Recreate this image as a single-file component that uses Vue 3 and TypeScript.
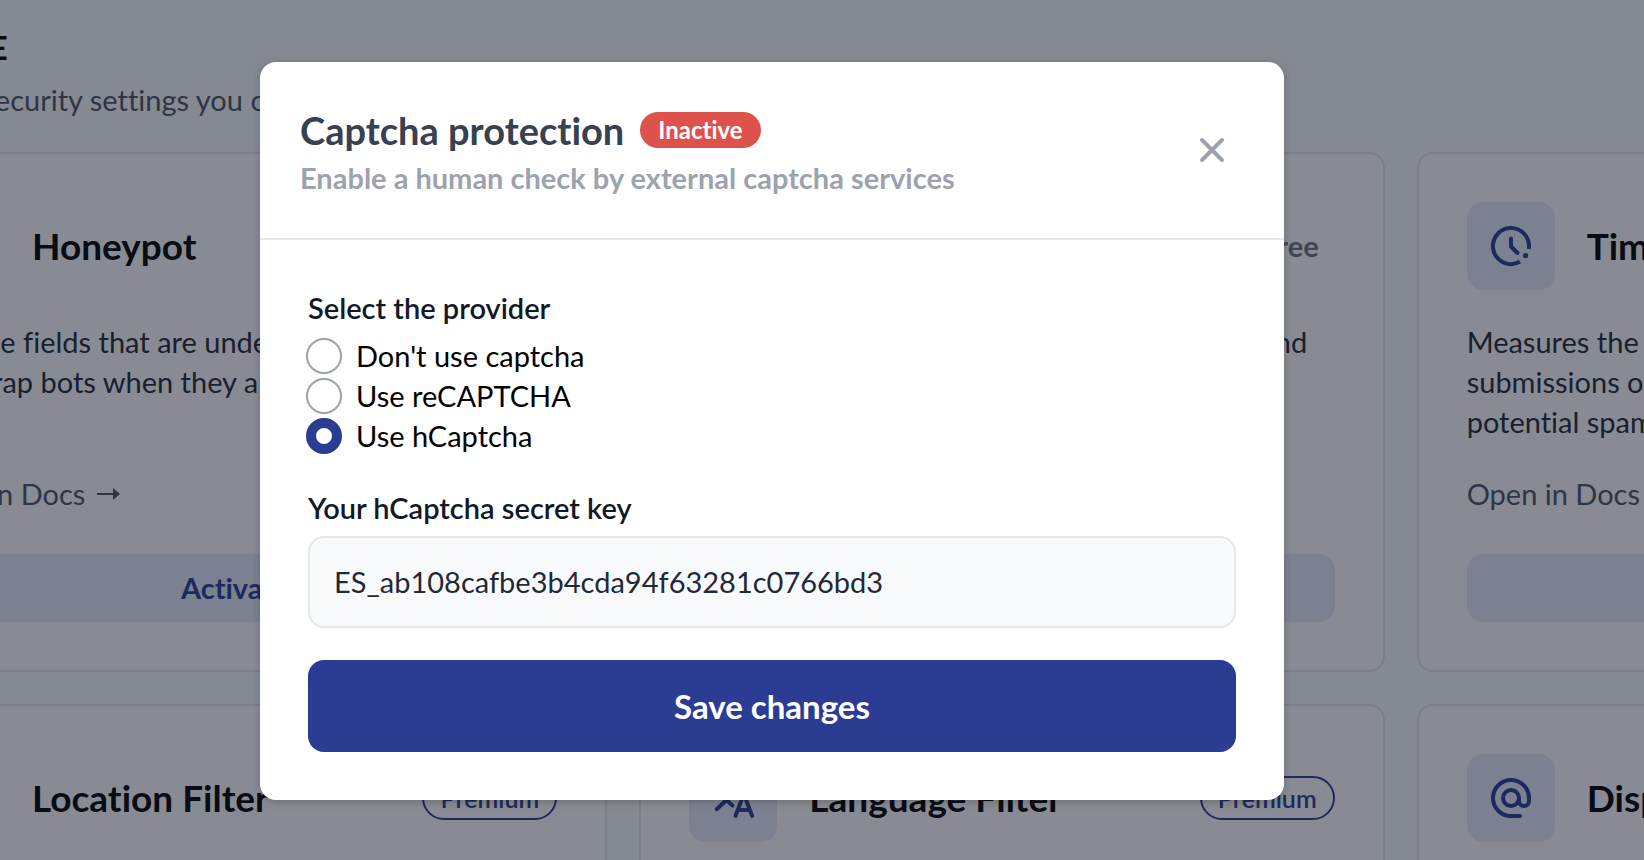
<script setup lang="ts">
import { ref } from 'vue'

type IconName = 'honeypot' | 'captcha' | 'clock' | 'pin' | 'translate' | 'at'

interface Feature {
  title: string
  icon: IconName
  plan: 'Free' | 'Premium'
  text: string[]
}

const features: Feature[] = [
  { title: 'Honeypot', icon: 'honeypot', plan: 'Free', text: ['Invisible fields that are under the hood.', 'They trap bots when they are filled'] },
  { title: 'Captcha', icon: 'captcha', plan: 'Free', text: ['A human check via external captcha services and'] },
  { title: 'Time Trap', icon: 'clock', plan: 'Free', text: ['Measures the time between', 'submissions of a form to detect', 'potential spam'] },
  { title: 'Location Filter', icon: 'pin', plan: 'Premium', text: ['Filter by country'] },
  { title: 'Language Filter', icon: 'translate', plan: 'Premium', text: ['Filter by language'] },
  { title: 'Disposable Emails', icon: 'at', plan: 'Premium', text: ['Filter temporary addresses'] },
]

const providers = [
  { value: 'none', label: "Don't use captcha" },
  { value: 'recaptcha', label: 'Use reCAPTCHA' },
  { value: 'hcaptcha', label: 'Use hCaptcha' },
]

const provider = ref('hcaptcha')
const secretKey = ref('ES_ab108cafbe3b4cda94f63281c0766bd3')
</script>

<template>
  <div class="screen">
    <main class="page">
      <header class="page-head">
        <h1>STORAGE</h1>
        <p>Select all security settings you can change</p>
      </header>
      <section class="grid">
        <article v-for="f in features" :key="f.title" class="card">
          <div class="card-head">
            <span class="tile">
              <svg viewBox="0 0 48 48" class="icon" aria-hidden="true">
                <template v-if="f.icon === 'clock'">
                  <path d="M41.7 27A18 18 0 1 0 33 39.6" class="ring" />
                  <path d="M24 16.5V24.5L30.5 31" />
                  <circle cx="38.6" cy="33.6" r="2.6" class="dot" />
                </template>
                <template v-else-if="f.icon === 'at'">
                  <circle cx="24" cy="24" r="8" />
                  <path d="M33 42H24A18 18 0 1 1 42 24V27A5 5 0 0 1 32 27V24" />
                </template>
                <template v-else-if="f.icon === 'translate'">
                  <path d="M6 10H30M18 6V10M26 10C24 20 16 28 7.7 35.3M12 16C14 22 18 27 23.5 31.5" />
                  <path d="M26.5 42L34.8 20L43.2 42M29.5 36H40.5" />
                </template>
                <template v-else>
                  <circle cx="24" cy="24" r="16" />
                </template>
              </svg>
            </span>
            <h2>{{ f.title }}</h2>
            <span :class="['plan', f.plan === 'Premium' ? 'plan-premium' : 'plan-free']">{{ f.plan }}</span>
          </div>
          <p class="card-text">
            <template v-for="(line, i) in f.text" :key="i"><br v-if="i > 0" />{{ line }}</template>
          </p>
          <a href="#" class="docs">Open in Docs
            <svg viewBox="0 0 24 24" class="arrow" aria-hidden="true">
              <path d="M0 12H18" />
              <path d="M16 6L23 12L16 18Z" class="head" />
            </svg>
          </a>
          <button type="button" class="activate">Activate</button>
        </article>
      </section>
    </main>

    <div class="overlay">
      <form class="modal" role="dialog" aria-labelledby="modal-title" @submit.prevent>
        <header class="modal-head">
          <div class="modal-titles">
            <div class="title-row">
              <h2 id="modal-title">Captcha protection</h2>
              <span class="status">Inactive</span>
            </div>
            <p>Enable a human check by external captcha services</p>
          </div>
          <button type="button" class="close" aria-label="Close">
            <svg viewBox="0 0 24 24" aria-hidden="true"><path d="M7 7L17 17M17 7L7 17" /></svg>
          </button>
        </header>
        <div class="modal-body">
          <fieldset>
            <legend>Select the provider</legend>
            <label v-for="p in providers" :key="p.value" class="option">
              <input v-model="provider" type="radio" name="provider" :value="p.value" />
              <span>{{ p.label }}</span>
            </label>
          </fieldset>
          <div class="field">
            <label for="secret">Your hCaptcha secret key</label>
            <input id="secret" v-model="secretKey" type="text" spellcheck="false" />
          </div>
          <button type="submit" class="save">Save changes</button>
        </div>
      </form>
    </div>
  </div>
</template>

<style>
body {
  margin: 0;
  overflow: hidden;
}
</style>

<style scoped>
.screen,
.screen * {
  box-sizing: border-box;
}
.screen {
  position: relative;
  height: 100vh;
  overflow: hidden;
  background: #f9fafb;
  color: #111827;
  font-family: Lato, 'Liberation Sans', sans-serif;
  font-size: 29px;
  line-height: 40px;
  font-variant-ligatures: no-common-ligatures;
}
h1,
h2,
p {
  margin: 0;
}
button,
input {
  font: inherit;
  font-variant-ligatures: inherit;
}
button {
  border: 0;
  cursor: pointer;
}

/* The dashboard is wider than the window on both sides. */
.page {
  margin: 0 -518px 0 -138px;
  padding-top: 24px;
}
.page-head {
  margin-bottom: 32px;
}
.page-head h1 {
  font-size: 32px;
  line-height: 48px;
  font-weight: 700;
  color: #000;
  margin-bottom: 8px;
}
.page-head p {
  color: #4b5563;
}
.grid {
  display: grid;
  grid-template-columns: repeat(3, minmax(0, 1fr));
  gap: 32px;
}
.card {
  display: flex;
  flex-direction: column;
  padding: 48px;
  border: 2px solid #e5e7eb;
  border-radius: 16px;
  background: #fff;
}
.card-head {
  display: flex;
  align-items: center;
  gap: 32px;
  margin-bottom: 32px;
}
.tile {
  display: flex;
  align-items: center;
  justify-content: center;
  width: 88px;
  height: 88px;
  border-radius: 16px;
  background: #e7eafb;
}
.icon {
  width: 48px;
  height: 48px;
  fill: none;
  stroke: #2b3c93;
  stroke-width: 4;
  stroke-linecap: round;
  stroke-linejoin: round;
}
.icon .ring {
  stroke-linecap: butt;
}
.icon .dot {
  fill: #2b3c93;
  stroke: none;
}
.card-head h2 {
  font-size: 37px;
  line-height: 56px;
  font-weight: 700;
  color: #000;
}
.plan {
  margin-left: auto;
  padding: 0 16px;
  border-radius: 22px;
}
.plan-free {
  color: #6b7280;
  font-weight: 700;
}
.plan-premium {
  border: 2px solid #2b3c93;
  color: #2b3c93;
  font-size: 25px;
  font-weight: 600;
}
.card-text {
  min-height: 120px;
  margin-bottom: 32px;
  color: #1f2937;
}
.docs {
  display: flex;
  align-items: center;
  gap: 12px;
  margin-bottom: 40px;
  color: #4b5563;
  text-decoration: none;
}
.arrow {
  width: 24px;
  height: 24px;
  fill: none;
  stroke: #4b5563;
  stroke-width: 2;
}
.arrow .head {
  fill: #4b5563;
  stroke: none;
}
.activate {
  padding: 14px;
  border-radius: 16px;
  background: #e7eafb;
  color: #2b3c93;
  font-weight: 700;
}

.overlay {
  position: absolute;
  inset: 0;
  display: flex;
  align-items: flex-start;
  justify-content: center;
  padding: 62px 100px 0 0;
  background: rgba(17, 24, 39, 0.5);
}
.modal {
  width: 100%;
  max-width: 1024px;
  border-radius: 16px;
  background: #fff;
  box-shadow: 0 2px 8px rgba(0, 0, 0, 0.2);
}
.modal-head {
  display: flex;
  align-items: center;
  justify-content: space-between;
  padding: 40px;
  border-bottom: 2px solid #e5e7eb;
}
.title-row {
  display: flex;
  align-items: center;
  gap: 16px;
}
.title-row h2 {
  font-size: 38px;
  line-height: 56px;
  font-weight: 700;
  color: #374151;
}
.status {
  padding: 0 18px;
  border-radius: 18px;
  background: #de524c;
  color: #fff;
  font-size: 24px;
  line-height: 36px;
  font-weight: 700;
}
.modal-titles p {
  font-weight: 700;
  color: #9ca3af;
}
.close {
  padding: 8px;
  background: none;
}
.close svg {
  display: block;
  width: 48px;
  height: 48px;
  fill: none;
  stroke: #9ca3af;
  stroke-width: 2;
  stroke-linecap: round;
}
.modal-body {
  display: flex;
  flex-direction: column;
  gap: 32px;
  padding: 48px;
}
fieldset {
  margin: 0;
  padding: 0;
  border: 0;
}
legend {
  padding: 0;
  margin-bottom: 8px;
  font-weight: 600;
}
.option {
  display: flex;
  align-items: center;
  gap: 14px;
  margin-left: -2px;
  color: #000;
}
.option input {
  appearance: none;
  flex: none;
  width: 36px;
  height: 36px;
  margin: 0;
  border: 2px solid #9ca3af;
  border-radius: 50%;
  background: #fff;
}
.option input:checked {
  border: 10px solid #2b3c93;
}
.field {
  display: flex;
  flex-direction: column;
  gap: 8px;
}
.field label {
  font-weight: 600;
}
.field input {
  width: 100%;
  padding: 24px;
  border: 2px solid #e5e7eb;
  border-radius: 16px;
  background: #f9fafb;
  color: #1f2937;
}
.save {
  padding: 26px;
  border-radius: 16px;
  background: #2b3c93;
  color: #fff;
  font-size: 33px;
  font-weight: 700;
}
</style>
